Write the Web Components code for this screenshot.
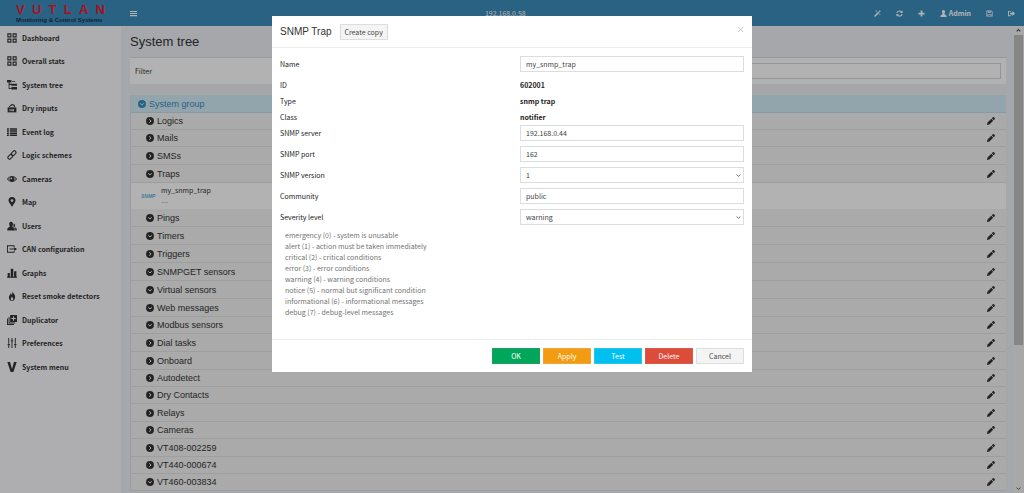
<!DOCTYPE html>
<html lang="en">
<head>
<meta charset="utf-8">
<meta name="viewport" content="width=device-width, initial-scale=1">
<title>System tree</title>
<style>
  html, body { margin: 0; height: 100%; overflow: hidden; }
  body { font: 7px/16px "Noto Sans CJK SC", "Noto Sans", sans-serif; color: #333; }
</style>
</head>
<body>
<snmp-app></snmp-app>

<script>
const ICONS = {
  grid: '<g fill="none" stroke="currentColor" stroke-width="1.8"><path d="M1.4 1.4h4.8v4.8H1.4zM9.8 1.4h4.8v4.8H9.8zM1.4 9.8h4.8v4.8H1.4zM9.8 9.8h4.8v4.8H9.8z"/></g>',
  tree: '<path d="M0 0h7v4H4v2h12v3H7V8H4v5h3v-2h9v4H7v-.6H2.600V4H0z"/><path d="M8 2h5v1.200H8z"/>',
  dry: '<path d="M1 7h14v8H1z"/><path d="M3 6.500C4 3 6 3.500 8 1l1.200 1C12 2 13 4 13 6.500h-1.600C11 4.500 10 3.600 8.500 3.600 7 5 5 5 4.500 6.500z"/><path d="M4 9.500h1.500V13H4zM7 9.500h1.200l1.500 2V9.500H11V13H9.800l-1.500-2v2H7z" fill="#fff"/>',
  list: '<path d="M0 2h3v2.400H0zM4.500 2H16v2.400H4.500zM0 5.300h3v2.400H0zM4.500 5.300H16v2.400H4.500zM0 8.600h3V11H0zM4.500 8.600H16V11H4.500zM0 11.900h3v2.400H0zM4.500 11.900H16v2.400H4.500z"/>',
  link: '<g fill="none" stroke="currentColor" stroke-width="1.700"><rect x="7.600" y="0.600" width="5.200" height="8.600" rx="2.600" transform="rotate(45 10.200 5.400)"/><rect x="3" y="6.800" width="5.200" height="8.600" rx="2.600" transform="rotate(45 5.600 10.600)"/></g>',
  eye: '<path d="M0 8c2-3.600 5-5 8-5s6 1.400 8 5c-2 3.400-5 4.800-8 4.800S2 11.400 0 8z"/><path d="M1.800 8c1-1.800 2-2.600 3.200-3a4.600 4.600 0 0 0 .2 6.200C3.800 10.600 2.800 9.600 1.800 8zM14.200 8c-1-1.800-2-2.600-3.200-3a4.600 4.600 0 0 1-.2 6.200c1.400-.6 2.400-1.600 3.400-3.200z" fill="#fff"/><circle cx="7" cy="6.800" r="1.400" fill="#fff"/>',
  pin: '<path fill-rule="evenodd" d="M8 0a5.600 5.600 0 0 1 5.600 5.600C13.600 9 9.500 12 8 16 6.500 12 2.400 9 2.400 5.600A5.600 5.600 0 0 1 8 0zm0 3.400a2.200 2.200 0 1 0 0 4.400A2.200 2.200 0 0 0 8 3.400z"/>',
  users: '<path d="M6.500 1c2 0 3 1.500 3 3.500S8.600 8 8.600 8.600c0 1 3.800 1.400 3.800 4V15H.5v-2.400c0-2.600 4-3 4-4C4.500 8 3.500 6.500 3.500 4.500S4.500 1 6.500 1z"/><path d="M10.500 4c1.600 0 2.400 1.200 2.400 2.700 0 1.500-.8 2.300-.8 3 0 .8 3.500 1 3.500 3.300v2h-2.400v-2.400c0-2-1.400-2.900-3-3.700z"/>',
  exit: '<path d="M0 2h12v3h-1.500V3.500h-9v9h9V11H12v3H0z"/><path d="M4 7.200h7.500V5l4.500 3-4.500 3V8.800H4z"/>',
  bars: '<path d="M1 8h3.600v7H1zM6 1h4v14H6zM11.400 5H15v10h-3.600z"/><path d="M0 14h16v1.500H0z"/>',
  flame: '<path fill-rule="evenodd" d="M8.500 0c.5 3 4.500 5 4.500 9.600C13 13 11 16 8 16s-5-2.600-5-5.600C3 7 5.500 6 5.500 3.500 7 4.500 7.300 5.500 7.300 6.500 8.500 5 9 2.500 8.500 0zM8 8.500c0 1.500-2 2.500-2 4.200C6 14 7 14.800 8 14.800s2-.8 2-2.100c0-1.700-2-2.700-2-4.200z"/>',
  dup: '<path fill-rule="evenodd" d="M5 0h11v11H5zm4.700 2v2.700H7v1.600h2.700V9h1.600V6.300H14V4.700h-2.700V2z"/><path d="M2.500 3H4v9h9v1.500H2.500z"/><path d="M0 5.500h1.500v9H11V16H0z"/>',
  sliders: '<path d="M2 0h1.500v9H2zM2 12h1.500v4H2zM1 9.500h3.600v2H1zM7.200 0h1.500v3H7.200zM7.200 6h1.500v10H7.200zM6.200 3.500h3.600v2H6.200zM12.500 0H14v9h-1.500zM12.500 12H14v4h-1.500zM11.500 9.500h3.600v2h-3.600z"/>',
  vee: '<path d="M.5 0h4.300L8 11l3.200-11h4.300L10.200 16H5.800z"/>',
  down: '<circle cx="8" cy="8" r="7.900"/><path d="M4.400 6.600L8 10l3.600-3.400" fill="none" stroke="var(--cut,#f4f4f4)" stroke-width="2"/>',
  right: '<circle cx="8" cy="8" r="7.900"/><path d="M6.600 4.400L10 8l-3.400 3.600" fill="none" stroke="var(--cut,#f4f4f4)" stroke-width="2"/>',
  pencil: '<path d="M0 16l1-4.800 7.600-7.600 3.800 3.800L4.800 15zM9.600 2.600l2-2c.8-.8 1.600-.6 2.200 0l1.600 1.600c.8.800.6 1.600 0 2.200l-2 2z"/>',
  menu: '<path d="M0 2h16v2.400H0zM0 6.800h16v2.400H0zM0 11.600h16V14H0z"/>',
  wand: '<path d="M0 13.500L10 3.500l2.500 2.500L2.500 16zM10.800 2.700L13 .5 15.500 3l-2.200 2.200zM5 0l.7 1.800L7.500 2.500l-1.800.7L5 5l-.7-1.800-1.800-.7 1.800-.7zM13.500 8l.6 1.500 1.500.6-1.500.6-.6 1.500-.6-1.500-1.500-.6 1.500-.6z"/>',
  refresh: '<path d="M1 7c.5-3.500 3.500-6 7-6 2 0 3.700.8 5 2l2-2v6H9l2.200-2.200C10.300 4 9.200 3.500 8 3.500 5.800 3.500 4 5 3.500 7zM15 9c-.5 3.500-3.500 6-7 6-2 0-3.700-.8-5-2l-2 2V9h6l-2.200 2.200c.9.800 2 1.300 3.200 1.300 2.200 0 4-1.500 4.500-3.500z"/>',
  plus: '<path d="M6 1h4v5h5v4h-5v5H6v-5H1V6h5z"/>',
  user: '<path d="M8 0c2.400 0 3.600 1.800 3.600 4.200S10 8 10 9c0 1.200 5 1.600 5 5v2H1v-2c0-3.400 5-3.800 5-5 0-1-1.600-2.400-1.600-4.800S5.600 0 8 0z"/>',
  floppy: '<path fill-rule="evenodd" d="M1 1h11l3 3v11H1zm1.600 1.600v10.800h1V9h8.800v4.400h1V4.600l-2-2H11V6H4.500V2.600zM5 10.400v3h6v-3zM7.500 2.600v2.200h2V2.600z"/>',
  signout: '<path d="M0 2h6.500v2H2v8h4.500v2H0z"/><path d="M5 6h5V2.500L16 8l-6 5.500V10H5z"/>',
  caretUp: '<path d="M2 11l6-6 6 6" fill="none" stroke="currentColor" stroke-width="3.600"/>',
  caretDown: '<path d="M2 5l6 6 6-6" fill="none" stroke="currentColor" stroke-width="3"/>',
  close: '<path d="M2 2l12 12M14 2L2 14" fill="none" stroke="currentColor" stroke-width="1.900"/>'
};

class Base extends HTMLElement {
  connectedCallback() {
    if (this.shadowRoot) return;
    this.attachShadow({ mode: 'open' }).innerHTML = this.render();
  }
  attr(name, fallback = '') { return this.getAttribute(name) ?? fallback; }
}

customElements.define('ui-icon', class extends Base {
  render() {
    return `<style>
      :host { display: block; flex: none; width: var(--size, 8px); height: var(--size, 8px); }
      svg { display: block; width: 100%; height: 100%; fill: currentColor; }
    </style><svg viewBox="0 0 16 16" aria-hidden="true">${ICONS[this.attr('name')]}</svg>`;
  }
});

customElements.define('app-header', class extends Base {
  render() {
    return `<style>
      :host { display: flex; align-items: center; height: 26px; background: #3c8dbc; color: #fff; font-weight: bold; }
      .logo { width: 89px; padding: 0 16px; }
      .word { display: flex; justify-content: space-between; font: bold 13px/14px "Liberation Sans", sans-serif; color: #f01830; }
      .tag { display: block; font: bold 6px/6px "Liberation Sans", sans-serif; color: #1c2f55; white-space: nowrap; }
      button, a { all: unset; display: flex; align-items: center; gap: 2px; cursor: pointer; }
      .menu { margin-left: 9px; }
      .ip { flex: 1; text-align: center; font-weight: normal; }
      nav { display: flex; align-items: center; gap: 15px; padding-right: 9px; --size: 7px; }
    </style>
    <div class="logo">
      <div class="word"><span>V</span><span>U</span><span>T</span><span>L</span><span>A</span><span>N</span></div>
      <span class="tag">Monitoring &amp; Control Systems</span>
    </div>
    <button class="menu" aria-label="Toggle menu"><ui-icon name="menu" style="--size:7px"></ui-icon></button>
    <span class="ip">192.168.0.58</span>
    <nav>
      <a href="#" aria-label="Wizard"><ui-icon name="wand"></ui-icon></a>
      <a href="#" aria-label="Refresh"><ui-icon name="refresh"></ui-icon></a>
      <a href="#" aria-label="Add"><ui-icon name="plus"></ui-icon></a>
      <a href="#"><ui-icon name="user"></ui-icon>Admin</a>
      <a href="#" aria-label="Save"><ui-icon name="floppy"></ui-icon></a>
      <a href="#" aria-label="Sign out"><ui-icon name="signout"></ui-icon></a>
    </nav>`;
  }
});

customElements.define('nav-item', class extends Base {
  render() {
    return `<style>
      :host { display: block; height: 23px; }
      :host(:nth-child(even)) { height: 24px; }
      a { display: flex; align-items: center; gap: 5px; height: 100%; padding-left: 7px; color: #333; font-weight: bold; text-decoration: none; white-space: nowrap; --size: 10px; }
    </style><a href="#"><ui-icon name="${this.attr('icon')}"></ui-icon><slot></slot></a>`;
  }
});

customElements.define('side-nav', class extends Base {
  render() {
    const items = [['grid', 'Dashboard'], ['grid', 'Overall stats'], ['tree', 'System tree'], ['dry', 'Dry inputs'],
      ['list', 'Event log'], ['link', 'Logic schemes'], ['eye', 'Cameras'], ['pin', 'Map'], ['users', 'Users'],
      ['exit', 'CAN configuration'], ['bars', 'Graphs'], ['flame', 'Reset smoke detectors'], ['dup', 'Duplicator'],
      ['sliders', 'Preferences'], ['vee', 'System menu']];
    return `<style>:host { display: block; width: 121px; flex: none; background: #f9fafc; }</style>
      <nav>${items.map(([i, t]) => `<nav-item icon="${i}">${t}</nav-item>`).join('')}</nav>`;
  }
});

customElements.define('filter-bar', class extends Base {
  render() {
    return `<style>
      :host { display: grid; grid-template-columns: 1fr 3fr; align-items: center; padding: 5px; background: #fff; border-top: 1px solid #d2dfe6; }
      input { box-sizing: border-box; width: 100%; height: 16px; border: 1px solid #d2d6de; background: #fff; font: inherit; padding: 0 5px; }
    </style><label for="filter">Filter</label><input id="filter" type="text">`;
  }
});

customElements.define('tree-row', class extends Base {
  render() {
    return `<style>
      :host { display: flex; align-items: center; box-sizing: border-box; height: 18px; padding: 0 11px 0 15px; gap: 3px;
        background: #f4f4f4; border-bottom: 1px solid #e2e2e2; font: 9px/16px "Liberation Sans", sans-serif; }
      :host([short]) { height: 17px; }
      :host([root]) { padding-left: 7px; background: #d2ecf7; border-bottom-color: #c8dde6; color: #3c8dbc; --cut: #d2ecf7; }
      span { flex: 1; }
      button { all: unset; cursor: pointer; }
    </style>
    <ui-icon name="${this.hasAttribute('open') ? 'down' : 'right'}"></ui-icon>
    <span><slot></slot></span>
    ${this.hasAttribute('root') ? '' : '<button aria-label="Edit"><ui-icon name="pencil"></ui-icon></button>'}`;
  }
});

customElements.define('tree-leaf', class extends Base {
  render() {
    return `<style>
      :host { display: flex; align-items: center; gap: 6px; height: 26px; padding-left: 10px; background: #fff; line-height: 11px; }
      .badge { font: italic bold 5px/8px "Liberation Sans", sans-serif; color: #5cb8de; width: 14px; }
      small { display: block; font-size: inherit; color: #999; }
    </style><span class="badge">SNMP</span><div><slot></slot><small>---</small></div>`;
  }
});

customElements.define('system-tree', class extends Base {
  render() {
    const rows = [['Logics', 's'], ['Mails', 's'], ['SMSs', ''], ['Traps', 'o'], null, ['Pings', 'o'], ['Timers', 'o'],
      ['Triggers', ''], ['SNMPGET sensors', 'o'], ['Virtual sensors', 'o'], ['Web messages', 'o'], ['Modbus sensors', 'os'],
      ['Dial tasks', ''], ['Onboard', ''], ['Autodetect', 's'], ['Dry Contacts', 's'], ['Relays', ''], ['Cameras', 's'],
      ['VT408-002259', ''], ['VT440-000674', 's'], ['VT460-003834', 'os']];
    return `<style>
      :host { display: block; border-left: 1px solid #dde3e8; }
    </style>
    <tree-row root open>System group</tree-row>
    ${rows.map(r => r ? `<tree-row ${r[1].includes('o') ? 'open' : ''} ${r[1].includes('s') ? 'short' : ''}>${r[0]}</tree-row>`
      : '<tree-leaf>my_snmp_trap</tree-leaf>').join('')}`;
  }
});

customElements.define('scroll-rail', class extends Base {
  render() {
    return `<style>
      :host { display: flex; flex-direction: column; align-items: center; width: 9px; flex: none; background: #f1f1f1; color: #555; --size: 5px; padding: 2px 0; margin-right: 1px; }
      .track { flex: 1; align-self: stretch; margin: 2px 0; }
      .thumb { height: 69%; background: #c1c1c1; }
    </style><ui-icon name="caretUp"></ui-icon><div class="track"><div class="thumb"></div></div><ui-icon name="caretDown"></ui-icon>`;
  }
});

customElements.define('ui-button', class extends Base {
  render() {
    return `<style>
      :host { display: block; min-width: 48px; }
      button { box-sizing: border-box; width: 100%; height: 16px; padding: 0 4px; border: 1px solid #ddd; background: #f4f4f4; color: #444; font: inherit; line-height: 14px; white-space: nowrap; cursor: pointer; }
      :host([kind]) button { color: #fff; }
      :host([kind=ok]) button { background: #00a65a; border-color: #1f9d62; }
      :host([kind=apply]) button { background: #f39c12; border-color: #eda43a; }
      :host([kind=test]) button { background: #00c0ef; border-color: #2bc4ec; }
      :host([kind=delete]) button { background: #dd4b39; border-color: #d75a4a; }
    </style><button type="button"><slot></slot></button>`;
  }
});

customElements.define('form-field', class extends Base {
  render() {
    const v = this.attr('value'), type = this.attr('type', 'text');
    const label = this.attr('label');
    const control = type === 'static' ? `<output id="f">${v}</output>`
      : type === 'select' ? `<div class="pick"><select id="f"><option>${v}</option></select><ui-icon name="caretDown"></ui-icon></div>`
      : `<input id="f" type="text" value="${v}">`;
    return `<style>
      :host { display: grid; grid-template-columns: 240px 1fr; align-items: center; height: 16px; }
      label { color: #222; }
      output { font-weight: bold; color: #222; }
      input, select { box-sizing: border-box; display: block; width: 100%; height: 16px; margin: 0; padding: 0 5px; border: 1px solid #dcdde0; border-radius: 0; background: #fff; color: #444; font: inherit; line-height: 14px; appearance: none; outline: 0; }
      .pick { position: relative; color: #666; }
      .pick ui-icon { position: absolute; right: 3px; top: 6px; --size: 5px; pointer-events: none; }
    </style><label for="f">${label}</label>${control}`;
  }
});

customElements.define('modal-dialog', class extends Base {
  render() {
    return `<style>
      :host { position: fixed; inset: 0; display: flex; justify-content: center; align-items: flex-start; padding-top: 16px; background: rgba(0,0,0,.3); }
      section { width: 480px; max-width: 100%; background: #fff; }
      header, footer { display: flex; align-items: center; padding: 0 8px; }
      header { height: 31px; border-bottom: 1px solid #eee; }
      h2 { margin: 0 8px 0 0; font: 10px/16px "Liberation Sans", sans-serif; color: #333; }
      .close { all: unset; align-self: flex-start; margin: 10px 0 0 auto; color: #bbb; --size: 7px; cursor: pointer; }
      .body { padding: 8px 8px 21px; }
      footer { justify-content: flex-end; gap: 3px; padding: 8px; border-top: 1px solid #eee; }
    </style>
    <section role="dialog" aria-modal="true" aria-labelledby="t">
      <header><h2 id="t"><slot name="title"></slot></h2><slot name="tools"></slot>
        <button class="close" aria-label="Close"><ui-icon name="close"></ui-icon></button></header>
      <div class="body"><slot></slot></div>
      <footer><slot name="actions"></slot></footer>
    </section>`;
  }
});

customElements.define('severity-hints', class extends Base {
  render() {
    const lines = ['emergency (0) - system is unusable', 'alert (1) - action must be taken immediately',
      'critical (2) - critical conditions', 'error (3) - error conditions', 'warning (4) - warning conditions',
      'notice (5) - normal but significant condition', 'informational (6) - informational messages',
      'debug (7) - debug-level messages'];
    return `<style>
      :host { display: block; }
      ul { margin: 0; padding: 0 0 0 5px; list-style: none; line-height: 11px; color: #737373; }
    </style><ul>${lines.map(l => `<li>${l}</li>`).join('')}</ul>`;
  }
});

customElements.define('snmp-app', class extends Base {
  render() {
    return `<style>
      :host { display: flex; flex-direction: column; height: 100vh; background: #ecf0f5; }
      .main { display: flex; flex: 1; min-height: 0; }
      main { flex: 1; min-width: 0; overflow: hidden; padding: 0 8px 0 9px; }
      h1 { margin: 0; font: 13px/31px "Liberation Sans", sans-serif; color: #333; }
      filter-bar { margin-bottom: 11px; }
      .form { display: flex; flex-direction: column; gap: 5px; }
      .facts { display: block; }
    </style>
    <app-header></app-header>
    <div class="main">
      <side-nav></side-nav>
      <main>
        <h1>System tree</h1>
        <filter-bar></filter-bar>
        <system-tree></system-tree>
      </main>
      <scroll-rail></scroll-rail>
    </div>
    <modal-dialog>
      <span slot="title">SNMP Trap</span>
      <ui-button slot="tools">Create copy</ui-button>
      <div class="form">
        <form-field label="Name" value="my_snmp_trap"></form-field>
        <div class="facts">
          <form-field type="static" label="ID" value="602001"></form-field>
          <form-field type="static" label="Type" value="snmp trap"></form-field>
          <form-field type="static" label="Class" value="notifier"></form-field>
          <form-field label="SNMP server" value="192.168.0.44"></form-field>
        </div>
        <form-field label="SNMP port" value="162"></form-field>
        <form-field type="select" label="SNMP version" value="1"></form-field>
        <form-field label="Community" value="public"></form-field>
        <form-field type="select" label="Severity level" value="warning"></form-field>
        <severity-hints></severity-hints>
      </div>
      <ui-button slot="actions" kind="ok">OK</ui-button>
      <ui-button slot="actions" kind="apply">Apply</ui-button>
      <ui-button slot="actions" kind="test">Test</ui-button>
      <ui-button slot="actions" kind="delete">Delete</ui-button>
      <ui-button slot="actions">Cancel</ui-button>
    </modal-dialog>`;
  }
});
</script>
</body>
</html>
